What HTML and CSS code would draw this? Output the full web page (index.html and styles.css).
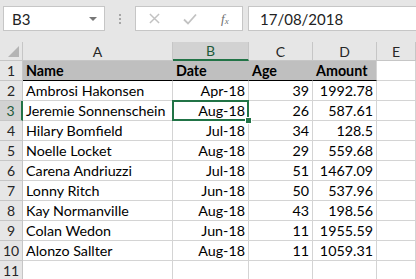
FILE: index.html
```html
<!DOCTYPE html>
<html lang="en">
  <head>
    <meta charset="UTF-8" />
    <meta name="viewport" content="width=device-width, initial-scale=1.0" />
    <title>Book1 - Excel</title>
    <link rel="stylesheet" href="styles.css">
  </head>
  <body>
    <div class="formula-bar">
      <div class="name-box">
        <span>B3</span>
        <span class="caret"></span>
      </div>
      <div class="grip">
        <span></span><span></span><span></span>
      </div>
      <div class="fx-buttons">
        <svg class="btn-icon" viewBox="0 0 12 12">
          <path d="M1 1 L11 11 M11 1 L1 11" stroke="currentColor" stroke-width="1.6" fill="none" />
        </svg>
        <svg class="btn-icon check" viewBox="0 0 14 12">
          <path d="M1 6.5 L5 10.5 L13 1.5" stroke="currentColor" stroke-width="1.8" fill="none" />
        </svg>
        <span class="fx">f<sub>x</sub></span>
      </div>
      <div class="formula-input">17/08/2018</div>
    </div>

    <div class="sheet">
      <div class="corner"><span class="triangle"></span></div>
      <div class="col-head">A</div>
      <div class="col-head active">B</div>
      <div class="col-head">C</div>
      <div class="col-head">D</div>
      <div class="col-head">E</div>

      <div class="row-head">1</div>
      <div class="cell title">Name</div>
      <div class="cell title">Date</div>
      <div class="cell title">Age</div>
      <div class="cell title last">Amount</div>
      <div class="cell"></div>

      <div class="row-head">2</div>
      <div class="cell">Ambrosi Hakonsen</div>
      <div class="cell num">Apr-18</div>
      <div class="cell num">39</div>
      <div class="cell num">1992.78</div>
      <div class="cell"></div>

      <div class="row-head active">3</div>
      <div class="cell">Jeremie Sonnenschein</div>
      <div class="cell num selected">Aug-18<span class="handle"></span></div>
      <div class="cell num">26</div>
      <div class="cell num">587.61</div>
      <div class="cell"></div>

      <div class="row-head">4</div>
      <div class="cell">Hilary Bomfield</div>
      <div class="cell num">Jul-18</div>
      <div class="cell num">34</div>
      <div class="cell num">128.5</div>
      <div class="cell"></div>

      <div class="row-head">5</div>
      <div class="cell">Noelle Locket</div>
      <div class="cell num">Aug-18</div>
      <div class="cell num">29</div>
      <div class="cell num">559.68</div>
      <div class="cell"></div>

      <div class="row-head">6</div>
      <div class="cell">Carena Andriuzzi</div>
      <div class="cell num">Jul-18</div>
      <div class="cell num">51</div>
      <div class="cell num">1467.09</div>
      <div class="cell"></div>

      <div class="row-head">7</div>
      <div class="cell">Lonny Ritch</div>
      <div class="cell num">Jun-18</div>
      <div class="cell num">50</div>
      <div class="cell num">537.96</div>
      <div class="cell"></div>

      <div class="row-head">8</div>
      <div class="cell">Kay Normanville</div>
      <div class="cell num">Aug-18</div>
      <div class="cell num">43</div>
      <div class="cell num">198.56</div>
      <div class="cell"></div>

      <div class="row-head">9</div>
      <div class="cell">Colan Wedon</div>
      <div class="cell num">Jun-18</div>
      <div class="cell num">11</div>
      <div class="cell num">1955.59</div>
      <div class="cell"></div>

      <div class="row-head">10</div>
      <div class="cell">Alonzo Sallter</div>
      <div class="cell num">Aug-18</div>
      <div class="cell num">11</div>
      <div class="cell num">1059.31</div>
      <div class="cell"></div>

      <div class="row-head">11</div>
      <div class="cell"></div>
      <div class="cell"></div>
      <div class="cell"></div>
      <div class="cell"></div>
      <div class="cell"></div>
    </div>
  </body>
</html>
```

FILE: styles.css
```css
:root {
  --chrome: #e6e6e6;
  --head: #e6e6e6;
  --head-active: #d2d2d2;
  --head-line: #c6c6c6;
  --grid: #d4d4d4;
  --green: #217346;
  --text: #000000;
}

body {
  width: 416px;
  height: 279px;
  margin: 0;
  overflow: hidden;
  background: var(--chrome);
  font-family: Lato, "Liberation Sans", sans-serif;
  color: var(--text);
}

.formula-bar {
  display: flex;
  align-items: stretch;
  height: 42px;
  padding: 6px 0 11px 3px;
  box-sizing: border-box;
}

.name-box {
  display: flex;
  align-items: center;
  justify-content: space-between;
  width: 102px;
  padding: 0 7px 0 8px;
  box-sizing: border-box;
  background: #ffffff;
  border: 1px solid #c6c6c6;
  font-size: 15px;
  color: #222;
}

.caret {
  width: 0;
  height: 0;
  border-left: 4px solid transparent;
  border-right: 4px solid transparent;
  border-top: 4px solid #777;
}

.grip {
  display: flex;
  flex-direction: column;
  justify-content: center;
  gap: 2px;
  width: 30px;
  align-items: center;
}

.grip span {
  width: 2px;
  height: 2px;
  background: #a6a6a6;
}

.fx-buttons {
  display: flex;
  align-items: center;
  width: 108px;
  padding-left: 13px;
  box-sizing: border-box;
  background: #ffffff;
  border: 1px solid #c6c6c6;
  margin-right: 5px;
}

.btn-icon {
  width: 11px;
  height: 11px;
  color: #c2c2c2;
  margin-right: 23px;
}

.btn-icon.check {
  width: 14px;
  height: 12px;
  margin-right: 24px;
}

.fx {
  font-family: "Liberation Serif", serif;
  font-style: italic;
  font-size: 13px;
  color: #6f6f6f;
}

.fx sub {
  font-size: 9px;
  vertical-align: -1px;
}

.formula-input {
  flex: 1;
  display: flex;
  align-items: center;
  padding-left: 11px;
  background: #ffffff;
  border: 1px solid #c6c6c6;
  border-right: none;
  font-size: 15px;
  color: #222;
}

.sheet {
  display: grid;
  grid-template-columns: 23px 150px 76px 64px 64px 39px;
  grid-template-rows: 19px repeat(11, 20px);
  background: #ffffff;
}

.corner {
  position: relative;
  background: var(--head);
  border-right: 1px solid var(--head-line);
  border-bottom: 1px solid var(--head-line);
}

.triangle {
  position: absolute;
  right: 3px;
  bottom: 3px;
  width: 0;
  height: 0;
  border-left: 11px solid transparent;
  border-bottom: 11px solid #b4b4b4;
}

.col-head {
  display: flex;
  align-items: center;
  justify-content: center;
  background: var(--head);
  border-right: 1px solid var(--head-line);
  border-bottom: 1px solid var(--head-line);
  font-size: 14px;
  color: #262626;
  box-sizing: border-box;
}

.col-head.active {
  background: var(--head-active);
  border-bottom: 2px solid var(--green);
  color: #1e5a3a;
}

.row-head {
  display: flex;
  align-items: flex-end;
  justify-content: center;
  padding-bottom: 1px;
  background: var(--head);
  border-right: 1px solid var(--head-line);
  border-bottom: 1px solid var(--head-line);
  font-size: 14px;
  color: #262626;
  box-sizing: border-box;
}

.row-head.active {
  background: var(--head-active);
  border-right: 2px solid var(--green);
  color: #1e5a3a;
}

.cell {
  display: flex;
  align-items: flex-end;
  padding: 0 3px 1px 3px;
  border-right: 1px solid var(--grid);
  border-bottom: 1px solid var(--grid);
  font-size: 14.3px;
  white-space: nowrap;
  overflow: hidden;
  box-sizing: border-box;
}

.cell.num {
  justify-content: flex-end;
}

.cell.title {
  background: #bfbfbf;
  border-right-color: #bfbfbf;
  border-bottom: 1px solid #000000;
  font-weight: 700;
}

.cell.title.last {
  border-right-color: var(--grid);
}

.cell.selected {
  position: relative;
  overflow: visible;
}

.cell.selected::after {
  content: "";
  position: absolute;
  left: -1px;
  top: -1px;
  right: -1px;
  bottom: -1px;
  border: 2px solid var(--green);
}

.handle {
  position: absolute;
  right: -4px;
  bottom: -4px;
  width: 5px;
  height: 5px;
  background: var(--green);
  border: 1px solid #ffffff;
  z-index: 1;
}
```
